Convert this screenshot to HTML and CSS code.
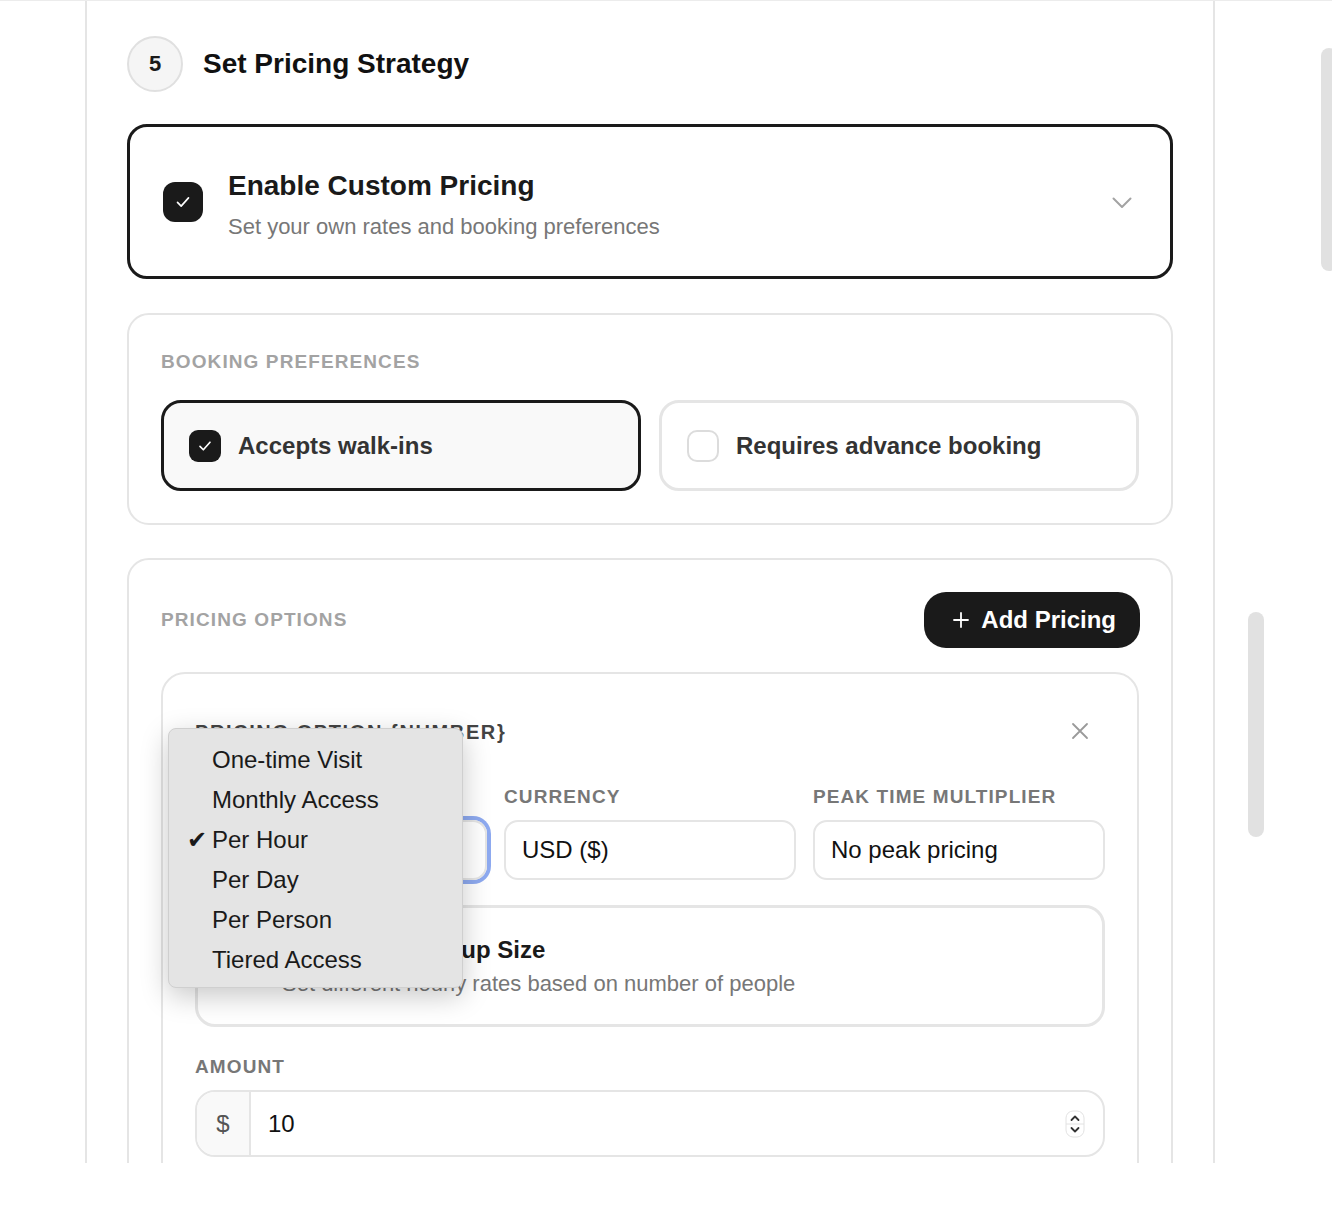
FILE: index.html
```html
<!DOCTYPE html>
<html lang="en">
<head>
  <meta charset="UTF-8" />
  <meta name="viewport" content="width=device-width, initial-scale=1.0" />
  <title>Set Pricing Strategy</title>
  <link rel="stylesheet" href="styles.css">
</head>
<body>

  <div class="page">
    <div class="panel">

      <!-- Step header -->
      <div class="step-head">
        <div class="step-num">5</div>
        <h2 class="step-title">Set Pricing Strategy</h2>
      </div>

      <!-- Custom pricing toggle -->
      <div class="custom-card">
        <div class="check check-lg">
          <svg viewBox="0 0 24 24" width="22" height="22"><path d="M6 12.5l4 4 8-9" fill="none" stroke="#fff" stroke-width="1.8" stroke-linecap="round" stroke-linejoin="round"/></svg>
        </div>
        <div class="custom-text">
          <div class="custom-title">Enable Custom Pricing</div>
          <div class="custom-sub">Set your own rates and booking preferences</div>
        </div>
        <svg class="chevron" viewBox="0 0 20 12" width="20" height="12"><path d="M1.5 1.5l8.5 8.5 8.5-8.5" fill="none" stroke="#a3a3a3" stroke-width="2" stroke-linecap="round" stroke-linejoin="round"/></svg>
      </div>

      <!-- Booking preferences -->
      <div class="section">
        <div class="section-label">Booking Preferences</div>
        <div class="pref-grid">
          <div class="pref pref-on">
            <div class="check check-sm">
              <svg viewBox="0 0 24 24" width="20" height="20"><path d="M6 12.5l4 4 8-9" fill="none" stroke="#fff" stroke-width="2" stroke-linecap="round" stroke-linejoin="round"/></svg>
            </div>
            <span>Accepts walk-ins</span>
          </div>
          <div class="pref">
            <div class="box-empty"></div>
            <span>Requires advance booking</span>
          </div>
        </div>
      </div>

      <!-- Pricing options -->
      <div class="section">
        <div class="section-head">
          <div class="section-label">Pricing Options</div>
          <button class="add-btn">
            <svg viewBox="0 0 16 16" width="16" height="16"><path d="M8 1v14M1 8h14" stroke="#fff" stroke-width="1.8" stroke-linecap="round"/></svg>
            Add Pricing
          </button>
        </div>

        <div class="option-card">
          <div class="option-head">
            <div class="option-title">Pricing Option {number}</div>
            <svg class="close" viewBox="0 0 18 18" width="18" height="18"><path d="M2 2l14 14M16 2L2 16" stroke="#9a9a9a" stroke-width="1.8" stroke-linecap="round"/></svg>
          </div>

          <div class="field-grid">
            <div class="field">
              <label>Pricing Type</label>
              <div class="input focused">Per Hour</div>
            </div>
            <div class="field">
              <label>Currency</label>
              <div class="input">USD ($)</div>
            </div>
            <div class="field">
              <label>Peak Time Multiplier</label>
              <div class="input">No peak pricing</div>
            </div>
          </div>

          <div class="group-box">
            <div class="box-empty"></div>
            <div>
              <div class="group-title">Pricing by Group Size</div>
              <div class="group-sub">Set different hourly rates based on number of people</div>
            </div>
          </div>

          <div class="field amount">
            <label>Amount</label>
            <div class="amount-input">
              <div class="prefix">$</div>
              <div class="amount-value">10</div>
              <svg class="spinner" viewBox="0 0 20 28" width="20" height="28">
                <rect x="1" y="1" width="18" height="26" rx="7" fill="#fff" stroke="#e2e2e2"/>
                <path d="M1 14h18" stroke="#e2e2e2"/>
                <path d="M6.5 10l3.5-3.5 3.5 3.5M6.5 18l3.5 3.5 3.5-3.5" fill="none" stroke="#333" stroke-width="1.8" stroke-linecap="round" stroke-linejoin="round"/>
              </svg>
            </div>
          </div>

          <!-- open native select menu -->
          <ul class="menu">
            <li>One-time Visit</li>
            <li>Monthly Access</li>
            <li class="selected">Per Hour</li>
            <li>Per Day</li>
            <li>Per Person</li>
            <li>Tiered Access</li>
          </ul>
        </div>
      </div>

    </div>

    <div class="scroll scroll-page"></div>
    <div class="scroll scroll-inner"></div>
  </div>

</body>
</html>
```

FILE: styles.css
```css
* {
  margin: 0;
  padding: 0;
  box-sizing: border-box;
  font-family: "Liberation Sans", Arial, sans-serif;
}

body {
  background: #fff;
  color: #1a1a1a;
}

.page {
  position: relative;
  height: 1163px;
  overflow: hidden;
  border-top: 1px solid #ececec;
}

.panel {
  margin-left: 85px;
  width: 1130px;
  min-height: 100%;
  background: #fff;
  border-left: 2px solid #e5e5e5;
  border-right: 2px solid #e5e5e5;
  padding: 35px 40px 0;
}

/* Step header */
.step-head {
  display: flex;
  align-items: center;
  gap: 20px;
  margin-bottom: 32px;
}

.step-num {
  width: 56px;
  height: 56px;
  border-radius: 50%;
  border: 2px solid #e0e0e0;
  background: #f5f5f5;
  display: flex;
  align-items: center;
  justify-content: center;
  font-size: 22px;
  font-weight: bold;
  color: #1a1a1a;
}

.step-title {
  font-size: 28px;
  font-weight: bold;
  color: #111;
}

/* Custom pricing card */
.custom-card {
  height: 155px;
  border: 3px solid #1a1a1a;
  border-radius: 20px;
  display: flex;
  align-items: center;
  padding: 0 38px 0 33px;
  margin-bottom: 34px;
}

.check {
  background: #1a1a1a;
  display: flex;
  align-items: center;
  justify-content: center;
  flex-shrink: 0;
}

.check-lg {
  width: 40px;
  height: 40px;
  border-radius: 12px;
}

.check-sm {
  width: 32px;
  height: 32px;
  border-radius: 9px;
}

.custom-text {
  margin-left: 25px;
  margin-top: 6px;
  flex: 1;
}

.custom-title {
  font-size: 28px;
  font-weight: bold;
  color: #1a1a1a;
  line-height: 34px;
}

.custom-sub {
  font-size: 22px;
  color: #777;
  margin-top: 11px;
}

.chevron {
  margin-top: 2px;
}

/* Sections */
.section {
  border: 2px solid #e5e5e5;
  border-radius: 22px;
  padding: 32px;
  margin-bottom: 33px;
}

.section-label {
  font-size: 19px;
  font-weight: bold;
  color: #a3a3a3;
  text-transform: uppercase;
  letter-spacing: 1.1px;
  line-height: 26px;
}

.section > .section-label {
  margin-top: 2px;
}

.pref-grid {
  display: grid;
  grid-template-columns: 1fr 1fr;
  gap: 18px;
  margin-top: 25px;
}

.pref {
  height: 91px;
  border: 3px solid #e5e5e5;
  border-radius: 20px;
  display: flex;
  align-items: center;
  gap: 17px;
  padding: 0 25px;
  font-size: 24px;
  font-weight: bold;
  color: #333;
}

.pref-on {
  border-color: #1a1a1a;
  background: #f9f9f9;
}

.box-empty {
  width: 32px;
  height: 32px;
  border: 2px solid #dcdcdc;
  border-radius: 10px;
  background: #fff;
  flex-shrink: 0;
}

.section-head {
  display: flex;
  align-items: center;
  justify-content: space-between;
  margin-bottom: 24px;
}

.add-btn {
  height: 56px;
  background: #1a1a1a;
  color: #fff;
  border: none;
  border-radius: 22px;
  padding: 0 24px 0 29px;
  margin-right: -1px;
  display: flex;
  align-items: center;
  gap: 12px;
  font-size: 24px;
  font-weight: bold;
}

/* Pricing option card */
.option-card {
  position: relative;
  border: 2px solid #e5e5e5;
  border-radius: 24px;
  padding: 32px;
}

.option-head {
  height: 50px;
  display: flex;
  align-items: center;
  justify-content: space-between;
  padding-right: 16px;
  margin-bottom: 29px;
}

.option-title {
  font-size: 20px;
  font-weight: bold;
  color: #444;
  text-transform: uppercase;
  letter-spacing: 1.6px;
  padding-top: 2px;
}

.field-grid {
  display: grid;
  grid-template-columns: repeat(3, 1fr);
  gap: 17px;
}

.field label {
  display: block;
  font-size: 19px;
  font-weight: bold;
  color: #777;
  text-transform: uppercase;
  letter-spacing: 1.1px;
  line-height: 24px;
  margin-bottom: 11px;
}

.input {
  height: 60px;
  border: 2px solid #e5e5e5;
  border-radius: 14px;
  display: flex;
  align-items: center;
  padding: 0 16px;
  font-size: 24px;
  color: #111;
}

.focused {
  box-shadow: 0 0 0 4px #8eaaf0;
}

.group-box {
  margin-top: 25px;
  height: 122px;
  border: 3px solid #e5e5e5;
  border-radius: 20px;
  display: flex;
  align-items: center;
  gap: 24px;
  padding: 0 28px;
}

.group-title {
  font-size: 24px;
  font-weight: bold;
  color: #1a1a1a;
  padding-left: 14px;
}

.group-sub {
  font-size: 22px;
  color: #777;
  margin-top: 7px;
}

.amount {
  margin-top: 28px;
}

.amount-input {
  height: 67px;
  border: 2px solid #e5e5e5;
  border-radius: 20px;
  display: flex;
  align-items: center;
  overflow: hidden;
}

.prefix {
  width: 54px;
  height: 100%;
  background: #f9f9f9;
  border-right: 2px solid #e5e5e5;
  display: flex;
  align-items: center;
  justify-content: center;
  font-size: 24px;
  color: #555;
}

.amount-value {
  flex: 1;
  padding-left: 17px;
  font-size: 24px;
  color: #111;
}

.spinner {
  margin-right: 18px;
}

/* Open select menu */
.menu {
  position: absolute;
  left: 5px;
  top: 54px;
  width: 295px;
  list-style: none;
  background: #e4e4e4;
  border: 1px solid #cfcfcf;
  border-radius: 8px;
  padding: 11px 0 7px;
  box-shadow: 0 8px 28px rgba(0, 0, 0, 0.22);
  z-index: 5;
}

.menu li {
  position: relative;
  height: 40px;
  line-height: 40px;
  padding-left: 43px;
  font-size: 24px;
  color: #1a1a1a;
}

.menu .selected::before {
  content: "\2714";
  position: absolute;
  left: 18px;
  font-size: 24px;
  font-family: "DejaVu Sans", sans-serif;
}

/* Overlay scrollbars */
.scroll {
  position: absolute;
  background: #e1e1e1;
  border-radius: 8px;
}

.scroll-page {
  left: 1321px;
  top: 47px;
  width: 16px;
  height: 223px;
}

.scroll-inner {
  left: 1248px;
  top: 611px;
  width: 16px;
  height: 225px;
}
```
